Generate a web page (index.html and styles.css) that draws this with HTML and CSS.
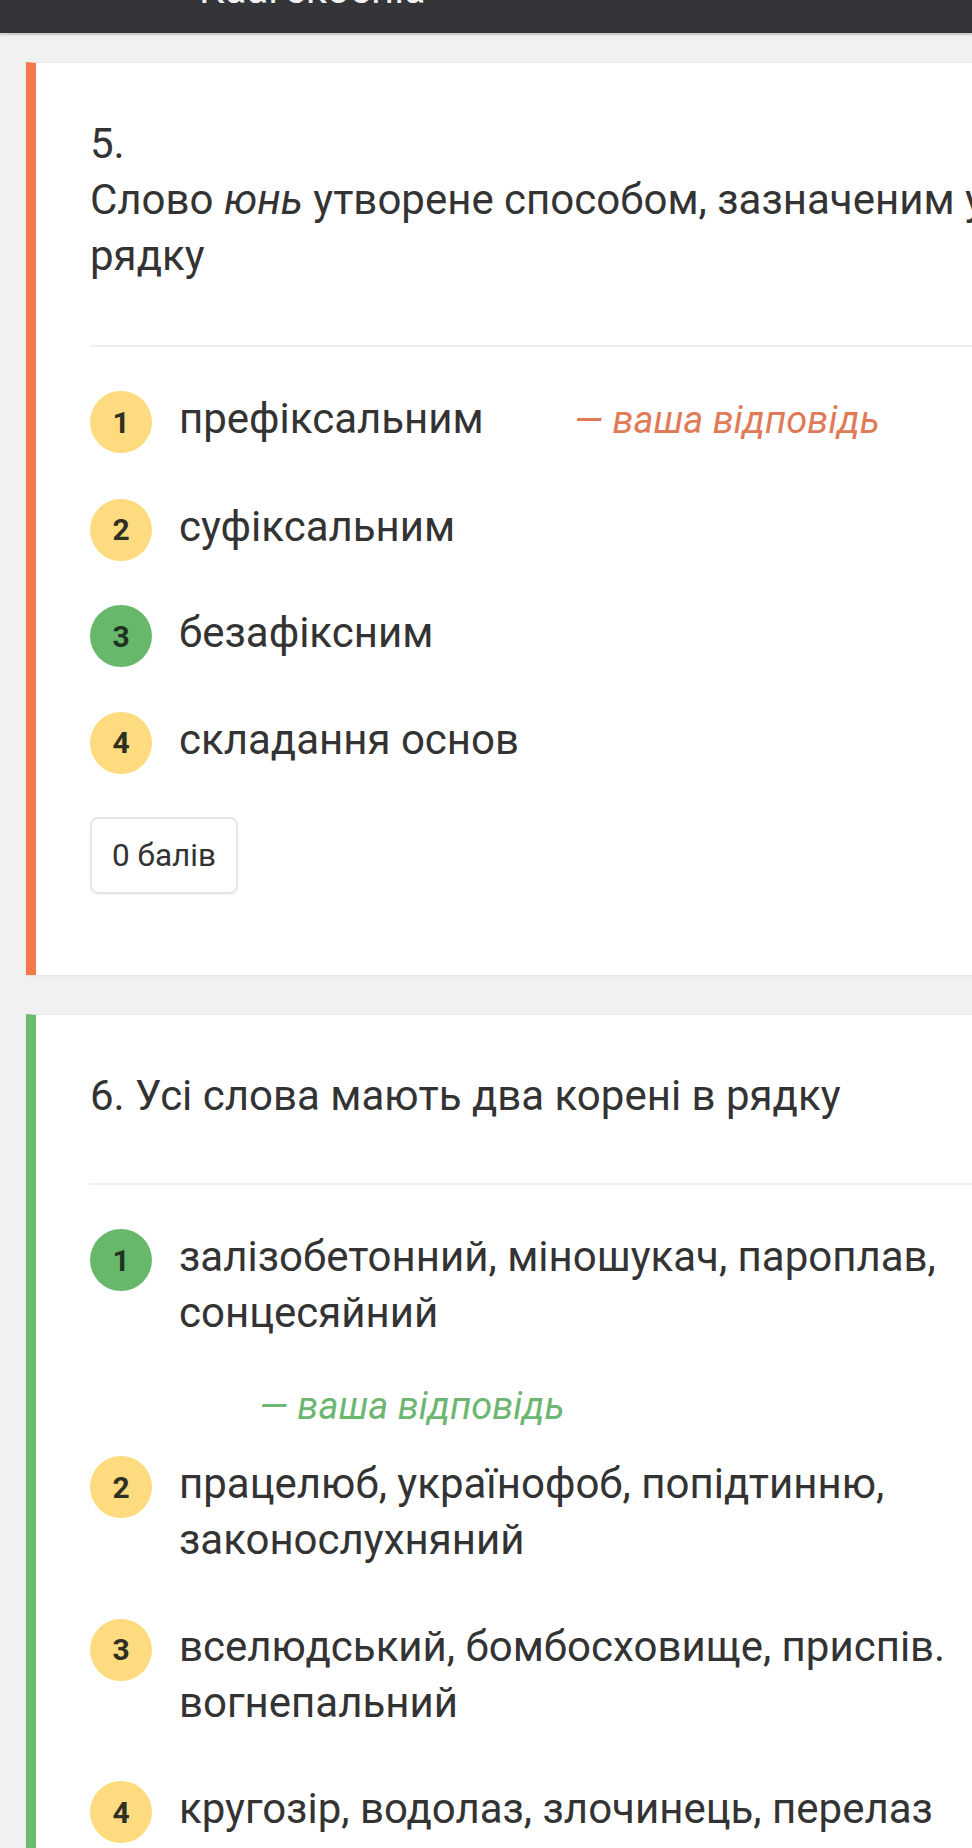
FILE: index.html
```html
<!DOCTYPE html>
<html lang="uk">
<head>
<meta charset="utf-8">
<title>Результати тесту</title>
<link rel="stylesheet" href="styles.css">
</head>
<body>
<header class="topbar">
  <div class="topbar__title">Каагекоеніа</div>
</header>
<main class="quiz">
  <section class="question question--wrong">
    <div class="question__text">
      <div>5.</div>
      <div>Слово <em>юнь</em> утворене способом, зазначеним у рядку</div>
    </div>
    <div class="question__divider"></div>
    <ol class="options">
      <li class="option">
        <span class="option__badge">1</span>
        <div class="option__text">префіксальним <span class="option__note option__note--wrong">— ваша відповідь</span></div>
      </li>
      <li class="option">
        <span class="option__badge">2</span>
        <div class="option__text">суфіксальним</div>
      </li>
      <li class="option">
        <span class="option__badge option__badge--correct">3</span>
        <div class="option__text">безафіксним</div>
      </li>
      <li class="option">
        <span class="option__badge">4</span>
        <div class="option__text">складання основ</div>
      </li>
    </ol>
    <div class="score">0 балів</div>
  </section>

  <section class="question question--right">
    <div class="question__text">
      <div>6. Усі слова мають два корені в рядку</div>
    </div>
    <div class="question__divider"></div>
    <ol class="options">
      <li class="option">
        <span class="option__badge option__badge--correct">1</span>
        <div class="option__text">залізобетонний, міношукач, пароплав, сонцесяйний
          <span class="option__note option__note--right option__note--below">— ваша відповідь</span>
        </div>
      </li>
      <li class="option">
        <span class="option__badge">2</span>
        <div class="option__text">працелюб, українофоб, попідтинню, законослухняний</div>
      </li>
      <li class="option">
        <span class="option__badge">3</span>
        <div class="option__text">вселюдський, бомбосховище, приспів. вогнепальний</div>
      </li>
      <li class="option">
        <span class="option__badge">4</span>
        <div class="option__text">кругозір, водолаз, злочинець, перелаз</div>
      </li>
    </ol>
  </section>
</main>
</body>
</html>
```

FILE: styles.css
```css
html {
  overflow-x: hidden;
}

body {
  margin: 0;
  background: #f1f1f1;
  font-family: Roboto, "Noto Sans", "Liberation Sans", sans-serif;
  color: #333333;
}

.topbar {
  height: 33px;
  background: #343539;
  box-shadow: 0 2px 2px rgba(0, 0, 0, 0.18);
  overflow: hidden;
  padding-left: 199px;
  position: relative;
  z-index: 1;
}

.topbar__title {
  margin-top: -30px;
  font-size: 40px;
  line-height: 40px;
  color: #f2f2f2;
  white-space: nowrap;
}

.quiz {
  box-sizing: border-box;
  width: 1110px;
  padding: 29px 0 40px 26px;
  display: flex;
  flex-direction: column;
  gap: 39px;
}

.question {
  background: #ffffff;
  border-left: 10px solid #f5784b;
  border-top: 1px solid #e8e8e8;
  box-shadow: 0 1px 2px rgba(0, 0, 0, 0.07);
  padding: 53px 50px 81px 54px;
}

.question--right {
  border-left-color: #6cbb6f;
}

.question__text {
  font-size: 42px;
  line-height: 56px;
}

.question__text em {
  font-style: italic;
}

.question__divider {
  height: 2px;
  background: #efefef;
  margin: 61px 0 44px;
}

.question--right .question__divider {
  margin-top: 59px;
}

.options {
  list-style: none;
  margin: 0 0 -1px;
  padding: 0;
}

.option {
  display: flex;
  align-items: flex-start;
  margin-bottom: 50.5px;
}

.option__badge {
  flex: none;
  width: 62px;
  height: 62px;
  margin-bottom: -6px;
  border-radius: 50%;
  background: #fddb7e;
  color: #2f2f24;
  font-size: 30px;
  font-weight: 700;
  display: flex;
  align-items: center;
  justify-content: center;
}

.option__badge--correct {
  background: #68b86b;
  color: #1f3320;
}

.option__text {
  margin-left: 27px;
  font-size: 42px;
  line-height: 56px;
}

.option__note {
  display: inline-block;
  margin-left: 80px;
  font-size: 38px;
  font-style: italic;
}

.option__note--wrong {
  color: #e07b57;
}

.option__note--right {
  color: #6db672;
}

.option__note--below {
  display: block;
  margin-top: 37px;
  margin-bottom: -28.5px;
}

.score {
  display: inline-flex;
  align-items: center;
  box-sizing: border-box;
  height: 77px;
  padding: 0 20px;
  border: 2px solid #e6e6e6;
  border-radius: 8px;
  box-shadow: 0 1px 2px rgba(0, 0, 0, 0.05);
  font-size: 31.5px;
  color: #333333;
}
```
